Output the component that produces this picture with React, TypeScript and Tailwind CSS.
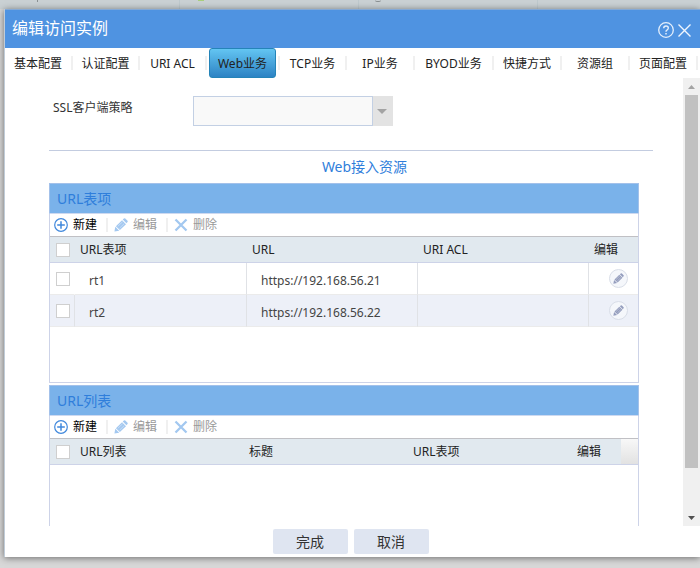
import React from "react";

const tabs = [
  { label: "基本配置", width: "w-[68px]" },
  { label: "认证配置", width: "w-[67px]" },
  { label: "URI ACL", width: "w-[67px]" },
  { label: "Web业务", width: "w-[73px]" },
  { label: "TCP业务", width: "w-[67px]" },
  { label: "IP业务", width: "w-[68px]" },
  { label: "BYOD业务", width: "w-[79px]" },
  { label: "快捷方式", width: "w-[68px]" },
  { label: "资源组", width: "w-[68px]" },
  { label: "页面配置", width: "w-[68px]" },
];

const entries = [
  { name: "rt1", url: "https://192.168.56.21", acl: "" },
  { name: "rt2", url: "https://192.168.56.22", acl: "" },
];

function Pencil({ className }: { className: string }) {
  return (
    <svg viewBox="0 0 16 16" className={className} aria-hidden="true">
      <path d="M.5 15.5l1-5.500 4.500 4.500z" fill="currentColor" />
      <path d="M2.200 9.300l7-6.800 4.500 4.500-7 6.800z" fill="currentColor" />
      <path d="M10 1.800l1.300-1.200q.8-.7 1.600 0l2.500 2.500q.7.800 0 1.600l-1.200 1.300z" fill="currentColor" />
      <path d="M4.300 9.600l5.600-5.300M6.300 11.600l5.500-5.300" stroke="white" strokeOpacity=".6" strokeWidth=".8" />
    </svg>
  );
}

function Check({ label }: { label: string }) {
  return (
    <input
      type="checkbox"
      aria-label={label}
      className="block size-3.5 shrink-0 appearance-none border border-[#cfcfcf] bg-white checked:bg-[#4f93e1]"
    />
  );
}

function Toolbar() {
  return (
    <div className="flex h-[22px] items-center pl-1 text-black">
      <button type="button" className="flex items-center gap-[5px]">
        <svg viewBox="0 0 14 14" className="size-3.5" fill="none" stroke="#4088dc" aria-hidden="true">
          <circle cx="7" cy="7" r="6.3" strokeWidth="1.2" />
          <path d="M7 3.2v7.6M3.2 7h7.6" strokeWidth="1.5" />
        </svg>
        新建
      </button>
      <span className="mr-1.5 ml-[9px] h-3.5 w-0.5 bg-[#f0f0f0]" />
      <button type="button" disabled className="flex items-center gap-[5px] text-[#999]">
        <Pencil className="size-3.5 text-[#a3c8f0]" />
        编辑
      </button>
      <span className="mr-1.5 ml-[9px] h-3.5 w-0.5 bg-[#f0f0f0]" />
      <button type="button" disabled className="flex items-center gap-[5px] text-[#999]">
        <svg viewBox="0 0 14 14" className="size-3.5" fill="none" stroke="#a3c8f0" strokeWidth="2.3" aria-hidden="true">
          <path d="M1.500 1.500l11 11M12.500 1.500l-11 11" />
        </svg>
        删除
      </button>
    </div>
  );
}

function Panel({ title, children }: { title: string; children: React.ReactNode }) {
  return (
    <section className="mr-3.5 border border-[#cdd3e8]">
      <h3 className="-mx-px -mt-px flex h-[31px] items-center border border-[#a3c1ea] border-b-[#cdd9f0] bg-[#7ab2ea] pl-[7px] text-sm text-[#2f7edb]">
        {title}
      </h3>
      <Toolbar />
      {children}
    </section>
  );
}

const headRow =
  "h-[27px] border-t border-b border-t-[#c0c0c4] border-b-[#cdd3e8] bg-[#e1e9ef] text-left text-[#222]";

const bodyCell = "border-r border-b border-r-[#e0e2e6] border-b-[#ebebeb] pt-1 pl-3.5 text-[#444]";

export default function App() {
  return (
    <div
      className="flex h-screen flex-col overflow-hidden bg-[#d8d8d8] text-xs text-[#333]"
      style={{ fontFamily: '"Noto Sans", "Noto Sans CJK SC", sans-serif' }}
    >
      <div className="grid h-[9px] shrink-0 grid-cols-[180px_179px_179px_1fr] overflow-hidden bg-[#cad1d4]">
        <div className="border-r border-[#bec9cd] pl-[37px]">
          <span className="block h-0.5 w-px bg-[#8a9092]" />
        </div>
        <div className="border-r border-[#bec9cd] pl-[18px]">
          <span className="block h-px w-1.5 bg-[#a9cf7c]" />
        </div>
        <div className="border-r border-[#bec9cd] pl-4">
          <span className="block h-0.5 w-1.5 rounded-b-full border-b border-[#8a9092]" />
        </div>
        <div />
      </div>

      <main className="mb-[11px] ml-1 flex min-h-0 flex-1 flex-col border-l border-[#c0ccd8] bg-white shadow-[0_1px_7px_rgba(0,0,0,0.5)]">
        <header className="flex h-[39px] shrink-0 items-center justify-between border-t border-[#84a9d6] bg-[#4f93e1] pr-[9px] pl-[7px] text-white">
          <h1 className="pb-0.5 text-base">编辑访问实例</h1>
          <div className="mt-0.5 flex items-center gap-1">
            <button type="button" aria-label="帮助">
              <svg viewBox="0 0 16 16" className="size-4" fill="none" stroke="#e4effc" aria-hidden="true">
                <circle cx="8" cy="8" r="7.3" strokeWidth="1.3" />
                <path d="M5.7 6.3Q5.7 4 8 4t2.3 2q0 1.1-1.1 1.8Q8 8.500 8 9.700" strokeWidth="1.4" />
                <path d="M8 11v1.500" strokeWidth="1.500" />
              </svg>
            </button>
            <button type="button" aria-label="关闭">
              <svg viewBox="0 0 13 13" className="size-[13px]" fill="none" stroke="#f0f6fe" strokeWidth="1.4" aria-hidden="true">
                <path d="M.5.5l12 12M12.5.5l-12 12" />
              </svg>
            </button>
          </div>
        </header>

        <nav className="flex h-[30px] shrink-0 overflow-hidden text-[#222]">
          {tabs.map((tab, i) => (
            <div key={tab.label} className={"flex shrink-0 items-center " + tab.width}>
              <button
                type="button"
                className={
                  i === 3
                    ? "mx-0.5 h-full flex-1 rounded-[3px] border border-[#2584b8] bg-linear-to-b from-[#63c5f2] to-[#2d83c4] pt-0.5 whitespace-nowrap"
                    : "h-full flex-1 pt-0.5 whitespace-nowrap"
                }
              >
                {tab.label}
              </button>
              <span className="h-3.5 w-0.5 shrink-0 bg-[#f0f0f0]" />
            </div>
          ))}
        </nav>

        <div className="flex min-h-0 flex-1">
          <div className="min-w-0 flex-1 overflow-hidden pr-[30px] pl-11">
            <div className="flex h-[72px] pt-[18px] pl-1">
              <label htmlFor="ssl-policy" className="w-[140px] pt-0.5 leading-5">
                SSL客户端策略
              </label>
              <div className="relative h-[30px] w-[200px]">
                <select id="ssl-policy" className="h-full w-full appearance-none border border-[#c3d0e4] bg-[#f9f9f9] px-2">
                  <option value="" />
                </select>
                <span className="pointer-events-none absolute inset-y-0 right-0 flex w-[21px] items-center justify-center border-l border-[#c3d0e4] bg-[#e3e3e3] pr-0.5">
                  <svg viewBox="0 0 10 5" className="h-[5px] w-2.5" aria-hidden="true">
                    <path d="M0 0h10L5 5z" fill="#a3a3a3" />
                  </svg>
                </span>
              </div>
            </div>
            <hr className="border-[#c3cce0]" />
            <h2 className="flex h-8 items-center justify-center pl-[27px] text-sm text-[#2f7edb]">Web接入资源</h2>

            <div className="flex flex-col gap-0.5">
              <Panel title="URL表项">
                <div className="h-[146px]">
                  <table className="w-full table-fixed border-separate border-spacing-0">
                    <colgroup>
                      <col className="w-[25px]" />
                      <col />
                      <col className="w-[171px]" />
                      <col className="w-[171px]" />
                      <col className="w-[49px]" />
                    </colgroup>
                    <thead>
                      <tr>
                        <th className={headRow + " pl-1.5"}>
                          <Check label="全选" />
                        </th>
                        {["URL表项", "URL", "URI ACL", "编辑"].map((h) => (
                          <th key={h} className={headRow + " pl-[5px] font-normal whitespace-nowrap"}>
                            {h}
                          </th>
                        ))}
                      </tr>
                    </thead>
                    <tbody>
                      {entries.map((e, i) => (
                        <tr key={e.name} className={i % 2 ? "bg-[#edf0f8]" : "bg-white"}>
                          <td
                            className={
                              "h-8 border-r border-b border-b-[#ebebeb] pl-1.5 " +
                              (i % 2 ? "border-r-[#e0e2e6]" : "border-r-white")
                            }
                          >
                            <Check label={e.name} />
                          </td>
                          <td className={bodyCell}>{e.name}</td>
                          <td className={bodyCell}>{e.url}</td>
                          <td className={bodyCell}>{e.acl}</td>
                          <td className="border-b border-b-[#ebebeb] pl-5">
                            <button
                              type="button"
                              aria-label={"编辑 " + e.name}
                              className="flex size-[19px] items-center justify-center rounded-full border border-[#d9dee8] bg-[#f5f7fb]"
                            >
                              <Pencil className="size-[11px] text-[#949dbd]" />
                            </button>
                          </td>
                        </tr>
                      ))}
                    </tbody>
                  </table>
                </div>
              </Panel>

              <Panel title="URL列表">
                <div className="h-[146px]">
                  <table className="w-full table-fixed border-separate border-spacing-0">
                    <colgroup>
                      <col className="w-[25px]" />
                      <col />
                      <col className="w-[164px]" />
                      <col className="w-[164px]" />
                      <col className="w-[49px]" />
                      <col className="w-[17px]" />
                    </colgroup>
                    <thead>
                      <tr>
                        <th className={headRow + " pl-1.5"}>
                          <Check label="全选" />
                        </th>
                        {["URL列表", "标题", "URL表项", "编辑"].map((h) => (
                          <th key={h} className={headRow + " pl-[5px] font-normal whitespace-nowrap"}>
                            {h}
                          </th>
                        ))}
                        <td className="border-t border-b border-t-[#c0c0c4] border-b-[#cdd3e8] bg-linear-to-b from-[#f8f8f8] to-[#e2e2e2]" />
                      </tr>
                    </thead>
                  </table>
                </div>
              </Panel>
            </div>
          </div>

          <div className="flex w-[17px] shrink-0 flex-col items-center bg-[#f0f0f0]" aria-hidden="true">
            <div className="flex h-[17px] items-center">
              <svg viewBox="0 0 7 4" className="h-1 w-[7px]">
                <path d="M0 4h7L3.500 0z" fill="#a3a3a3" />
              </svg>
            </div>
            <div className="flex min-h-0 w-[13px] flex-1 flex-col">
              <div className="h-[90%] bg-[#c1c1c1]" />
            </div>
            <div className="flex h-[17px] items-center">
              <svg viewBox="0 0 7 4" className="h-1 w-[7px]">
                <path d="M0 0h7L3.500 4z" fill="#505050" />
              </svg>
            </div>
          </div>
        </div>

        <footer className="flex h-[31px] shrink-0 items-center justify-center gap-1.5 pr-1 text-sm">
          <button type="button" className="h-[25px] w-[75px] rounded-xs bg-[#dfe5f1]">
            完成
          </button>
          <button type="button" className="h-[25px] w-[75px] rounded-xs bg-[#dfe5f1]">
            取消
          </button>
        </footer>
      </main>
    </div>
  );
}
